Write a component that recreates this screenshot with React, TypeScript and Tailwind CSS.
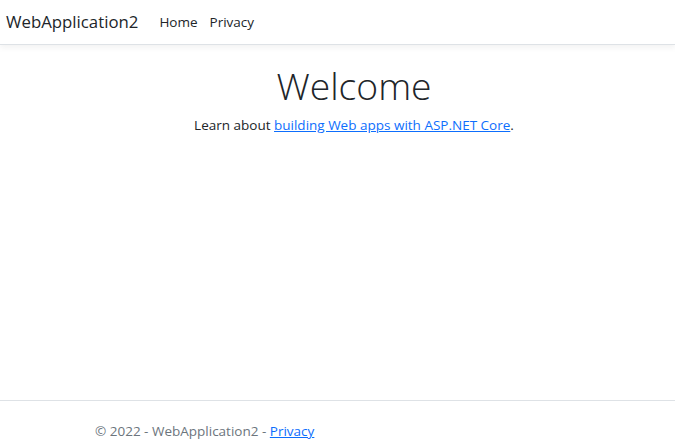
import React from "react";

export default function App() {
  return (
    <div
      className="relative h-[448px] w-[675px] bg-white text-[#212529] overflow-hidden"
      style={{ fontFamily: '"Open Sans", "Noto Sans", Arial, sans-serif' }}
    >
      <header className="h-[45px] border-b border-[#dee2e6] shadow-[0_3px_6px_rgba(0,0,0,0.05)] flex items-center px-[6px]">
        <span className="text-[16.8px] text-[#212529] leading-none">WebApplication2</span>
        <nav className="flex items-center ml-[21px] gap-[12px] text-[13.5px] text-[#212529]">
          <span>Home</span>
          <span>Privacy</span>
        </nav>
      </header>
      <main className="flex flex-col items-center pt-[19px] pl-[33px]">
        <h1 className="text-[37.3px] font-light leading-[1.2] text-[#212529]">Welcome</h1>
        <p className="mt-[6px] text-[13.5px] leading-[1.5]">
          Learn about{" "}
          <a className="text-[#0d6efd] underline" href="#">
            building Web apps with ASP.NET Core
          </a>
          .
        </p>
      </main>
      <footer className="absolute left-0 right-0 bottom-0 h-[48px] border-t border-[#dee2e6] flex items-center pl-[95px] pt-[14px] text-[13.5px] text-[#6c757d]">
        <span>
          © 2022 - WebApplication2 -{" "}
          <a className="text-[#0d6efd] underline" href="#">
            Privacy
          </a>
        </span>
      </footer>
    </div>
  );
}
